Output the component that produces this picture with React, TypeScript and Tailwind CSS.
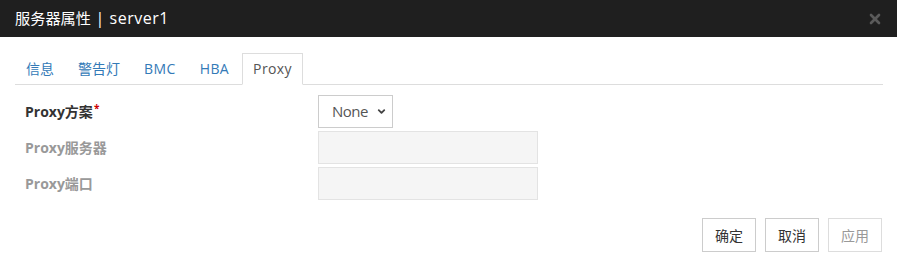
import { ChevronDown, X } from "lucide-react";

const font = { fontFamily: '"Open Sans", "Noto Sans CJK SC", sans-serif' };

const tabs = ["信息", "警告灯", "BMC", "HBA", "Proxy"];

export default function App() {
  return (
    <div className="w-[897px] h-[261px] bg-white text-[14px] text-[#333]" style={font}>
      {/* header */}
      <div className="h-[37px] bg-[#1f1f1f] flex items-center justify-between pl-[15px] pr-[14px]">
        <span className="text-white text-[16px] leading-none">
          <span className="text-[15.2px]">服务器属性</span>
          <span className="tracking-[0.5px]"> | server1</span>
        </span>
        <X className="w-[16px] h-[16px] text-[#5a5a5a]" strokeWidth={4} />
      </div>

      <div className="px-[15px] pt-[16px]">
        {/* tabs */}
        <ul className="flex border-b border-[#ddd] mr-[-1px]">
          {tabs.map((t) => {
            const active = t === "Proxy";
            const latin = /^[A-Za-z]+$/.test(t);
            return (
              <li key={t} className="mr-[2px] -mb-px">
                <span
                  className={
                    (active
                      ? "block px-[10px] py-[5px] leading-[20px] border border-[#ddd] border-b-white bg-white text-[#555]"
                      : "block px-[10px] py-[5px] leading-[20px] border border-transparent text-[#337ab7]") +
                    (latin ? " tracking-[0.4px]" : "")
                  }
                >
                  {t}
                </span>
              </li>
            );
          })}
        </ul>

        {/* form */}
        <div className="mt-[10px] flex flex-col gap-[3px]">
          <div className="flex items-center h-[33px]">
            <div className="w-[303px] pl-[10px] font-bold text-[#333]">
              Proxy方案<sup className="text-[#c00] text-[10px] ml-[1px]">*</sup>
            </div>
            <div className="w-[75px] h-[33px] border border-[#ccc] flex items-center justify-end pr-[5px] gap-[8px] text-[#555] text-[15px] tracking-[-0.5px]">
              <span>None</span>
              <ChevronDown className="w-[11px] h-[11px] text-[#444]" strokeWidth={4} />
            </div>
          </div>
          <div className="flex items-center h-[33px]">
            <div className="w-[303px] pl-[10px] font-bold text-[#999]">Proxy服务器</div>
            <div className="w-[220px] h-[33px] border border-[#e3e3e3] bg-[#f5f5f5]" />
          </div>
          <div className="flex items-center h-[33px]">
            <div className="w-[303px] pl-[10px] font-bold text-[#999]">Proxy端口</div>
            <div className="w-[220px] h-[33px] border border-[#e3e3e3] bg-[#f5f5f5]" />
          </div>
        </div>

        {/* buttons */}
        <div className="mt-[18px] flex justify-end gap-[9px]">
          <button className="w-[54px] h-[34px] border border-[#ccc] bg-white text-[#333]">确定</button>
          <button className="w-[54px] h-[34px] border border-[#ccc] bg-white text-[#333]">取消</button>
          <button className="w-[54px] h-[34px] border border-[#ddd] bg-white text-[#999]">应用</button>
        </div>
      </div>
    </div>
  );
}
